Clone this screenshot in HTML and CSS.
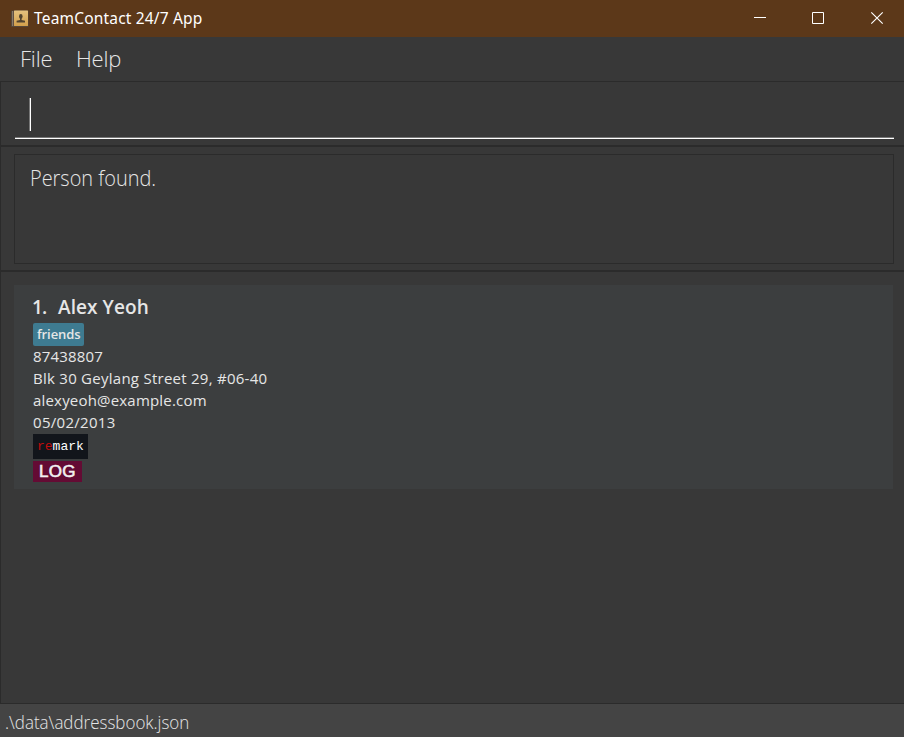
FILE: index.html
```html
<!DOCTYPE html>
<html lang="en">
<head>
<meta charset="utf-8">
<title>TeamContact 24/7 App</title>
<link rel="stylesheet" href="styles.css">
</head>
<body>
<div class="window">
  <header class="titlebar">
    <svg class="app-icon" width="18" height="18" viewBox="0 0 18 18">
      <defs><linearGradient id="cover" x1="0" y1="0" x2="0" y2="1"><stop offset="0" stop-color="#e5c27f"/><stop offset="1" stop-color="#d3a04c"/></linearGradient></defs>
      <rect x="0" y="0.5" width="17.5" height="16.5" rx="1" fill="#55473b"/>
      <rect x="1" y="1" width="1.2" height="15" fill="#8b7b68"/>
      <rect x="3" y="0.5" width="14" height="15.5" rx="0.5" fill="url(#cover)"/>
      <ellipse cx="9.8" cy="6.400" rx="1.8" ry="2.400" fill="#51432f"/>
      <path d="M9 8h1.600v2l3.400.8v1.700H5.600v-1.700l3.400-.8z" fill="#51432f"/>
    </svg>
    <span class="app-title">TeamContact 24/7 App</span>
    <svg class="controls" width="174" height="37" viewBox="0 0 174 37" fill="none" stroke="#fff">
      <path d="M24 17.5h12M82.500 12.500h11v11h-11z"/>
      <path d="M141.300 12.300l11.400 11.400M152.700 12.300l-11.400 11.400" stroke-width="1.150"/>
    </svg>
  </header>
  <nav class="menubar"><span class="menu-file">File</span><span class="menu-help">Help</span></nav>
  <section class="pane command"><div class="field"><i class="caret"></i></div></section>
  <section class="pane result"><div class="display"><span class="message">Person found.</span></div></section>
  <main class="pane list">
    <article class="card">
      <h1 class="name"><span class="index">1.</span><span class="person">Alex Yeoh</span></h1>
      <div class="tag"><span>friends</span></div>
      <p class="phone">87438807</p>
      <p class="address">Blk 30 Geylang Street 29, #06-40</p>
      <p class="email">alexyeoh@example.com</p>
      <p class="date">05/02/2013</p>
      <div class="remark"><span class="re">re</span>mark</div>
      <div class="log">LOG</div>
    </article>
  </main>
  <footer class="status"><span class="path">.\data\addressbook.json</span></footer>
</div>
</body>
</html>
```
FILE: styles.css
```css
* { box-sizing: border-box; margin: 0; padding: 0; }
body { overflow: hidden; background: #383838; font-family: "Open Sans", "Noto Sans", sans-serif; color: #e6e6e6; }
.window { width: 904px; height: 737px; display: flex; flex-direction: column; white-space: nowrap; }
.titlebar { height: 37px; background: #5c3819; display: flex; align-items: center; padding-left: 11px; flex: none; }
.app-icon { margin-right: 5px; }
.app-title { font-size: 15.5px; color: #fff; font-family: "Noto Sans", sans-serif; letter-spacing: .18px; padding-bottom: 2px; }
.controls { margin-left: auto; }
.menubar { height: 44px; flex: none; display: flex; padding-left: 20px; font-size: 22px; font-weight: 300; line-height: 42px; letter-spacing: -.2px; }
.menu-file { width: 56px; }
.pane { border: 1px solid #2b2b2b; border-right: 0; flex: none; }
.command { height: 65px; padding: 15px 10px 0 14px; }
.field { height: 42px; border-bottom: 1px solid #fff; box-shadow: inset 0 -1px #777; padding: 1px 0 0 14px; }
.caret { display: block; width: 2px; height: 33px; background: linear-gradient(90deg, #777 50%, #fff 50%); }
.result { height: 125px; padding: 7px 10px 0 13px; }
.display { height: 110px; border: 1px solid #2b2b2b; padding: 6px 15px; font-size: 22px; line-height: 32px; font-weight: 300; }
.message, .path { display: inline-block; transform-origin: 0 50%; }
.message { transform: scaleX(.906); }
.path { transform: scaleX(.943); }
.list { height: 433px; border-bottom: 1px solid #2b2b2b; padding: 13px 11px 0 13px; }
.card { height: 204px; background: #3c3e3f; padding: 11px 19px 0; font-size: 15px; line-height: 22px; letter-spacing: .19px; }
.name { display: flex; font-size: 19px; font-weight: 600; line-height: 22px; height: 27px; letter-spacing: 0; }
.index { width: 26px; margin-left: -1px; letter-spacing: -.9px; }
.person { letter-spacing: .08px; }
.address { letter-spacing: .26px; }
.date { letter-spacing: .3px; }
.tag { width: 51px; height: 23px; border-radius: 2px; background: #3e7b91; padding-left: 4px; font-size: 13px; line-height: 22px; font-weight: 600; letter-spacing: -.1px; margin-bottom: -1px; }
.remark { width: 55px; height: 25px; margin-top: 1px; background: #12151b; color: #fff; padding-left: 4px; font: 13px/25px "Liberation Mono", monospace; letter-spacing: 0; }
.re { color: #c00d0d; }
.log { width: 49px; height: 21px; margin-top: 2px; background: #640b34; padding-left: 6px; font: 17px/21px "Liberation Sans", sans-serif; letter-spacing: .3px; -webkit-text-stroke: .6px #f1f1f1; color: #f1f1f1; }
.status { flex: 1; background: #444; padding-left: 5px; font-size: 18px; font-weight: 300; line-height: 37px; }
```
